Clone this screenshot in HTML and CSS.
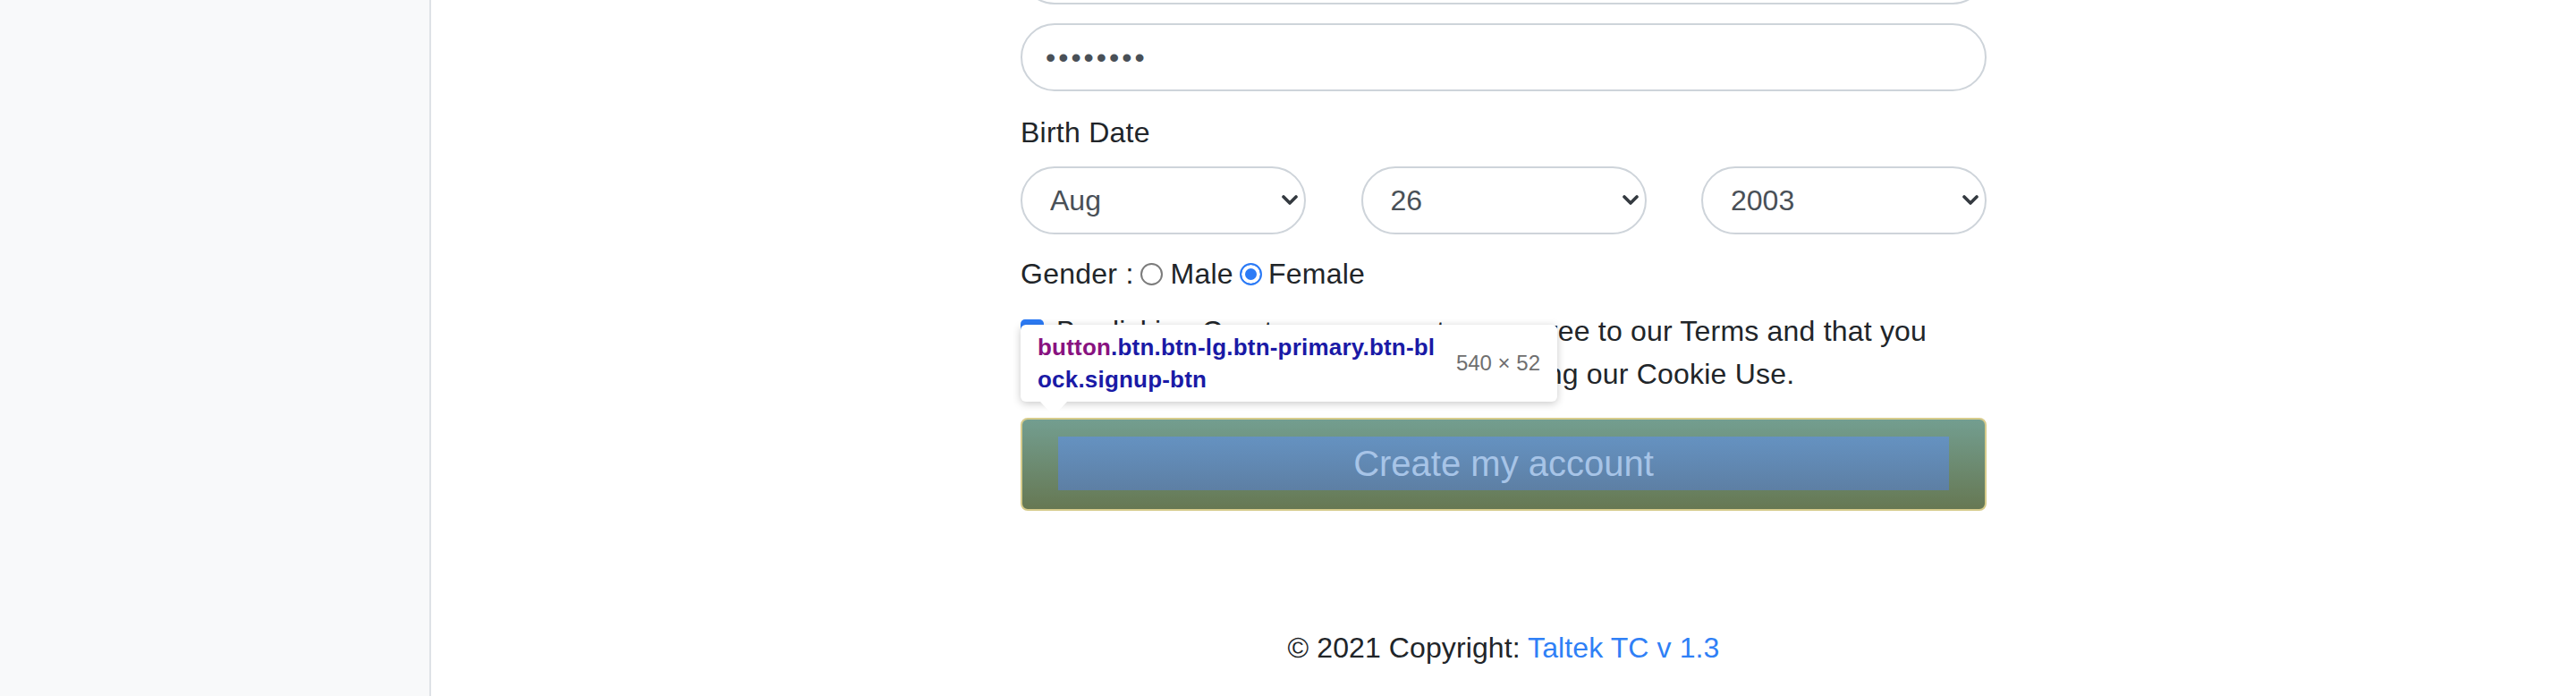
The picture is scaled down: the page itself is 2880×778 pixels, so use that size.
FILE: index.html
```html
<!DOCTYPE html>
<html lang="en">
<head>
<meta charset="utf-8">
<title>Sign up</title>
<link rel="stylesheet" href="styles.css">
</head>
<body>
<aside class="sidebar"></aside>
<main class="main">
  <form class="signup">
    <input class="field" type="email" value="">
    <input class="field field-pass" type="password" value="abcdefgh">
    <label class="label">Birth Date</label>
    <div class="date-row">
      <div class="select-wrap">
        <select class="field select"><option>Aug</option></select>
        <svg class="chev" viewBox="0 0 18 11" width="18" height="11"><path d="M2 2 L9 9 L16 2" fill="none" stroke="#343a40" stroke-width="3.6" stroke-linecap="round" stroke-linejoin="round"/></svg>
      </div>
      <div class="select-wrap">
        <select class="field select"><option>26</option></select>
        <svg class="chev" viewBox="0 0 18 11" width="18" height="11"><path d="M2 2 L9 9 L16 2" fill="none" stroke="#343a40" stroke-width="3.6" stroke-linecap="round" stroke-linejoin="round"/></svg>
      </div>
      <div class="select-wrap">
        <select class="field select"><option>2003</option></select>
        <svg class="chev" viewBox="0 0 18 11" width="18" height="11"><path d="M2 2 L9 9 L16 2" fill="none" stroke="#343a40" stroke-width="3.6" stroke-linecap="round" stroke-linejoin="round"/></svg>
      </div>
    </div>
    <div class="gender">
      <span>Gender :</span>
      <input class="radio" type="radio" name="g" id="male">
      <label for="male">Male</label>
      <input class="radio radio-female" type="radio" name="g" id="female" checked>
      <label for="female">Female</label>
    </div>
    <div class="terms">
      <input class="check" type="checkbox" checked>
      <span class="terms-text">By clicking Create my account, you agree to our Terms and that you<br>have read our Data Use Policy, including our Cookie Use.</span>
    </div>
    <div class="btn-wrap">
      <div class="tip">
        <div class="tip-name"><span class="tip-tag">button</span>.btn.btn-lg.btn-primary.btn-bl<br>ock.signup-btn</div>
        <div class="tip-size">540 × 52</div>
      </div>
      <button class="signup-btn" type="button"><span class="btn-content">Create my account</span></button>
    </div>
  </form>
  <footer class="footer">© 2021 Copyright: <a class="footer-link" href="#">Taltek TC v 1.3</a></footer>
</main>
</body>
</html>
```
FILE: styles.css
```css
* { box-sizing: border-box; }
html, body { margin: 0; padding: 0; }
body {
  display: flex;
  height: 778px;
  overflow: hidden;
  background: #fff;
  font-family: "Liberation Sans", Arial, sans-serif;
  font-size: 32px;
  line-height: 48px;
  color: #212529;
  letter-spacing: 0.25px;
}
.sidebar {
  width: 482px;
  flex: 0 0 482px;
  background: #f8f9fa;
  border-right: 2px solid #dee2e6;
}
.main {
  flex: 1;
  display: flex;
  flex-direction: column;
  align-items: center;
}
.signup {
  width: 1080px;
  margin-top: -71px;
  display: flex;
  flex-direction: column;
}
.field {
  display: block;
  width: 100%;
  height: 76px;
  border: 2px solid #ced4da;
  border-radius: 38px;
  background: #fff;
  font-family: "Liberation Sans", Arial, sans-serif;
  font-size: 32px;
  color: #495057;
  padding: 0 26px;
  outline: none;
}
.field-pass {
  margin-top: 21px;
  letter-spacing: 3px;
}
.label {
  margin-top: 22px;
  margin-bottom: 14px;
  line-height: 48px;
}
.date-row {
  display: flex;
  justify-content: space-between;
}
.select-wrap {
  position: relative;
  width: 319px;
}
.select {
  appearance: none;
  -webkit-appearance: none;
  padding-left: 31px;
}
.chev {
  position: absolute;
  right: 9px;
  top: 32px;
  pointer-events: none;
}
.gender {
  margin-top: 20px;
  display: flex;
  align-items: center;
  height: 48px;
}
.radio {
  appearance: none;
  -webkit-appearance: none;
  width: 25px;
  height: 25px;
  margin: 0 9px 0 7px;
  border: 2px solid #7b7b7b;
  border-radius: 50%;
  background: #fff;
}
.radio-female { margin: 0 7px 0 7px; }
.radio:checked {
  border-color: #2c7bf6;
  background: #2c7bf6;
  box-shadow: inset 0 0 0 4px #fff;
}
.terms {
  margin-top: 16px;
  display: flex;
  align-items: flex-start;
}
.check {
  appearance: none;
  -webkit-appearance: none;
  flex: 0 0 26px;
  width: 26px;
  height: 26px;
  margin: 11px 14px 0 0;
  border-radius: 5px;
  background: #2c7bf6;
}
.terms-text { line-height: 48px; letter-spacing: 0.2px; }
.btn-wrap {
  position: relative;
  margin-top: 25px;
}
.signup-btn {
  display: block;
  width: 100%;
  height: 104px;
  padding: 19px 40px 21px;
  border: 2px solid #d7cc8c;
  border-radius: 8px;
  background: linear-gradient(#739e90, #667853);
  cursor: pointer;
}
.btn-content {
  display: block;
  height: 60px;
  line-height: 60px;
  background: linear-gradient(#6592c1, #5d7fa4);
  color: #a7c4e7;
  font-family: "Liberation Sans", Arial, sans-serif;
  font-size: 40px;
  letter-spacing: 0;
  text-align: center;
}
.tip {
  position: absolute;
  left: 0;
  bottom: calc(100% + 18px);
  width: 600px;
  height: 86px;
  padding: 7px 19px;
  background: #fff;
  border-radius: 6px;
  box-shadow: 0 2px 10px rgba(0, 0, 0, 0.22);
  display: flex;
  justify-content: space-between;
  align-items: center;
  z-index: 2;
  letter-spacing: 0;
}
.tip::after {
  content: "";
  position: absolute;
  left: 22px;
  top: 100%;
  border-left: 15px solid transparent;
  border-right: 15px solid transparent;
  border-top: 16px solid #fff;
}
.tip-name {
  font-size: 26px;
  line-height: 36px;
  font-weight: bold;
  color: #1a1aa6;
  letter-spacing: 0.2px;
}
.tip-tag { color: #881280; }
.tip-size {
  font-size: 24px;
  color: #6f6f6f;
}
.footer {
  margin-top: 129px;
  text-align: center;
  line-height: 48px;
  letter-spacing: 0.1px;
}
.footer-link {
  color: #2f80f6;
  text-decoration: none;
}
```
